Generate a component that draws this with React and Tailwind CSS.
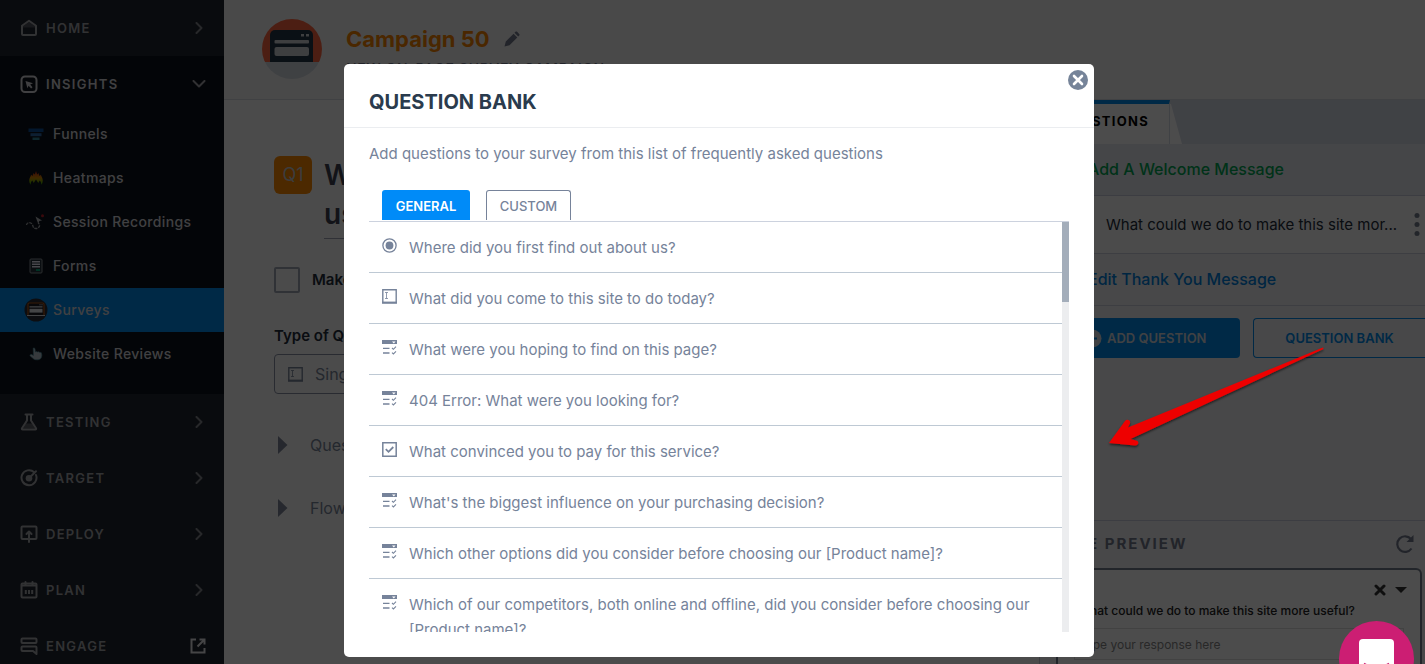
import React from "react";

const stroke = {
  fill: "none",
  stroke: "currentColor",
  strokeWidth: 2,
  strokeLinecap: "round",
  strokeLinejoin: "round",
};

const HomeIcon = () => (
  <svg width="18" height="18" viewBox="0 0 18 18" {...stroke}>
    <path d="M2 6.700 9 1.800l7 4.900V15a1 1 0 0 1-1 1H3a1 1 0 0 1-1-1z" />
    <path d="M3 8.500V7.200L9 3l6 4.200v1.300z" fill="currentColor" stroke="none" opacity=".35" />
  </svg>
);
const InsightsIcon = () => (
  <svg width="18" height="18" viewBox="0 0 18 18" {...stroke}>
    <rect x="1.500" y="1.500" width="15" height="15.500" rx="3.500" />
    <path d="M5.500 6l7.500 2.200-2.800 1.300 2.300 2.700-1.400 1.300-2.500-2.700-1.200 2.500z" fill="currentColor" stroke="none" />
  </svg>
);
const FlaskIcon = () => (
  <svg width="18" height="18" viewBox="0 0 18 18" {...stroke}>
    <path d="M5.500 1.500h7M7 2v5.500L2 15.200c-.4.800 0 1.300.7 1.300h12.600c.7 0 1.100-.5.700-1.300L11 7.500V2" />
    <path d="M6 10.500h6l3 5H3z" fill="currentColor" stroke="none" opacity=".45" />
  </svg>
);
const TargetIcon = () => (
  <svg width="18" height="18" viewBox="0 0 18 18" {...stroke}>
    <path d="M14.200 3.300A7.500 7.500 0 1 0 16 6" />
    <circle cx="9" cy="9.200" r="3.300" fill="currentColor" stroke="none" />
    <path d="M9 9.200l7-7" />
  </svg>
);
const DeployIcon = () => (
  <svg width="18" height="18" viewBox="0 0 18 18" {...stroke}>
    <rect x="1.500" y="1.500" width="15" height="12.500" rx="1" />
    <path d="M9 17V8M6.500 9 9 6.500 11.500 9" />
  </svg>
);
const PlanIcon = () => (
  <svg width="18" height="18" viewBox="0 0 18 18" {...stroke}>
    <rect x="1.500" y="2.500" width="15" height="14" rx="1" />
    <path d="M2 4.500h14" />
    <path d="M5.500 1v3M12.500 1v3" />
    <path d="M5.800 9v4M9 9v4M12.200 9v4" strokeLinecap="butt" />
  </svg>
);
const EngageIcon = () => (
  <svg width="18" height="18" viewBox="0 0 18 18" {...stroke}>
    <rect x="1.500" y="1.500" width="15" height="4.500" rx="1" />
    <path d="M16.500 17V10.500a1 1 0 0 0-1-1h-13a1 1 0 0 0-1 1V13a1 1 0 0 0 1 1H13z" />
  </svg>
);
const Chevron = ({ down }) => (
  <svg width="16" height="16" viewBox="0 0 16 16" {...stroke} opacity=".75">
    <path d={down ? "M3.500 5 9 10.500 14.500 5" : "M6.500 3 11.500 8l-5 5"} />
  </svg>
);
const ExternalIcon = () => (
  <svg width="16" height="16" viewBox="0 0 16 16" fill="none" stroke="#e8e8ea" strokeWidth="2">
    <path d="M6 1.500H1.500v13h13V10M9.500 1.500h5v5M14 2 7.500 8.500" />
  </svg>
);

const FunnelIcon = () => (
  <svg width="16" height="14" viewBox="0 0 16 14">
    <path fill="#0b4f96" d="M.5 1.500h15v3.500h-15z" />
    <path fill="#2d6aa8" d="M2.500 6.200h11v3h-11z" />
    <path fill="#2f8298" d="M4.500 10.500h7v2.500h-7z" />
  </svg>
);
const FlameIcon = () => (
  <svg width="14" height="14" viewBox="0 0 14 14">
    <defs>
      <linearGradient id="heat" x1="0" y1="0" x2="0" y2="1">
        <stop offset="0" stopColor="#c81e1e" />
        <stop offset=".5" stopColor="#d08a00" />
        <stop offset="1" stopColor="#2fb400" />
      </linearGradient>
    </defs>
    <path
      fill="url(#heat)"
      d="M7 0l1.200 3.500L9.500 2l1 3 1.300-1.200L13 6.500c1.200 2.500 1 4.800-.6 7.300-.2-2.300-.8-3.400-1.700-4.300L9.300 12 7 8.500 4.700 12 3.300 9.500c-.9.900-1.500 2-1.700 4.300C0 11.300-.2 9 1 6.500l1.200-2.700L3.500 5l1-3 1.300 1.500z"
    />
  </svg>
);
const RecordingIcon = () => (
  <svg width="22" height="18" viewBox="0 0 22 18">
    <path d="M1.500 12C2 9 5.500 9 7 11s.5 4.500 4 4.500 5-4 2-5.500" fill="none" stroke="#a4a8ac" strokeWidth="1.300" strokeDasharray="3 1" />
    <path fill="#b4b8bc" d="M10.500 3.500l6.500 4-2.700.6-1 2.900z" />
    <circle cx="17.500" cy="2.800" r="1.500" fill="#c3202a" />
  </svg>
);
const FormIcon = () => (
  <svg width="14" height="16" viewBox="0 0 14 16">
    <rect x="1" y="1" width="12" height="14" rx="1" fill="#24303a" stroke="#8d959b" />
    <path d="M3 3.800h8M3 6.300h8M3 8.800h8" stroke="#eef" strokeWidth="1.600" />
    <path d="M7 12h4" stroke="#00a77a" strokeWidth="2" />
  </svg>
);
const SurveyIcon = () => (
  <svg width="24" height="24" viewBox="0 0 24 24">
    <circle cx="12" cy="12" r="11.500" fill="#2a2e38" />
    <path d="M4 17V6.500a1.500 1.500 0 0 1 1.500-1.500h13a1.500 1.500 0 0 1 1.500 1.500V17" fill="#1d1d24" stroke="#b85a14" strokeWidth="1.200" />
    <path d="M5.500 8.800h13M3 17.500h18" stroke="#d9dde2" strokeWidth="1.200" />
    <path d="M5.500 10.800h13v3.800h-13z" fill="#e3e6ea" />
    <path d="M15.500 6.800h1M17.500 6.800h1" stroke="#e3e6ea" />
  </svg>
);
const HandIcon = () => (
  <svg width="14" height="14" viewBox="0 0 14 14">
    <path
      fill="#b4c4cc"
      stroke="#4c93a8"
      strokeWidth=".6"
      d="M4.200 1.200c.8-.5 1.700-.1 1.800.8l.4 3 1.300-.4.900.5 1.200-.3.900.6 1.400.1c1 1.600 1 4.500-.4 6.100-1.200 1.400-4.800 1.600-6.700.6L1.200 9c-.6-1 .3-1.900 1.400-1.500l1.900 1z"
    />
  </svg>
);

const sub = [
  ["Funnels", FunnelIcon],
  ["Heatmaps", FlameIcon],
  ["Session Recordings", RecordingIcon],
  ["Forms", FormIcon],
  ["Surveys", SurveyIcon],
  ["Website Reviews", HandIcon],
];
const lower = [
  ["TESTING", FlaskIcon],
  ["TARGET", TargetIcon],
  ["DEPLOY", DeployIcon],
  ["PLAN", PlanIcon],
  ["ENGAGE", EngageIcon],
];

function NavRow({ label, Icon, end, bright }) {
  return (
    <a
      href="#"
      className={`flex h-14 items-center gap-2 pr-[18px] pl-5 text-[13px] font-semibold tracking-widest ${bright ? "text-[#d8d8dc]" : "text-[#a6a7ac]"}`}
    >
      <Icon />
      <span className="grow pt-0.5">{label}</span>
      {end}
    </a>
  );
}

function Sidebar() {
  return (
    <nav className="w-56 shrink-0 bg-[#20252f]">
      <NavRow label="HOME" Icon={HomeIcon} end={<Chevron />} />
      <div className="bg-[#0d131b] pb-[18px]">
        <NavRow label="INSIGHTS" Icon={InsightsIcon} end={<Chevron down />} bright />
        {sub.map(([label, Icon]) => (
          <a
            key={label}
            href="#"
            className={`flex h-11 items-center gap-[5px] pl-6 text-sm font-medium tracking-wide text-[#d8d8dc] ${label === "Surveys" ? "bg-[#008aec]" : ""}`}
          >
            <span className="flex w-6 justify-center">
              <Icon />
            </span>
            {label}
          </a>
        ))}
      </div>
      {lower.map(([label, Icon]) => (
        <NavRow key={label} label={label} Icon={Icon} end={label === "ENGAGE" ? <ExternalIcon /> : <Chevron />} />
      ))}
    </nav>
  );
}

const CampaignLogo = () => (
  <svg width="60" height="60" viewBox="0 0 60 60">
    <defs>
      <clipPath id="disc">
        <circle cx="30" cy="30" r="30" />
      </clipPath>
    </defs>
    <g clipPath="url(#disc)">
      <path fill="#ff6640" d="M0 0h60v43H0z" />
      <path fill="#d4d9e1" d="M0 43h60v17H0z" />
      <path fill="#243746" d="M8 43V16a5 5 0 0 1 5-5h33a5 5 0 0 1 5 5v27z" />
      <rect x="12.500" y="21" width="34.500" height="3.500" rx="1" fill="#d0d2d5" />
      <rect x="12.500" y="28" width="34.500" height="9" rx="2" fill="#d0d2d5" />
      <path fill="#d0d2d5" d="M39 15h3v2.500h-3zM44 15h3v2.500h-3z" />
    </g>
  </svg>
);
const PencilIcon = () => (
  <svg width="16" height="16" viewBox="0 0 16 16" fill="#747a8c">
    <path d="M.5 15.500l1.300-5L9.600 2.700l3.700 3.700L5.500 14.200zM10.500 1.800l1-1c.5-.5 1.100-.5 1.600 0l2.100 2.100c.5.5.5 1.100 0 1.600l-1 1z" />
  </svg>
);
const TextBoxIcon = () => (
  <svg width="15" height="15" viewBox="0 0 15 15" fill="none" stroke="currentColor">
    <path d="M.8.8h13.400v13H.8z" strokeWidth="1.400" />
    <path d="M0 13.600h15" strokeWidth="2" />
    <path d="M3 3.500h3M4.500 3.500v6M3 9.500h3" strokeWidth=".8" />
  </svg>
);
const RadioIcon = () => (
  <svg width="15" height="15" viewBox="0 0 15 15">
    <circle cx="7.500" cy="7.500" r="6.600" fill="none" stroke="currentColor" strokeWidth="1.300" />
    <circle cx="7.500" cy="7.500" r="3.900" fill="currentColor" />
  </svg>
);
const CheckIcon = () => (
  <svg width="15" height="15" viewBox="0 0 15 15" fill="none" stroke="currentColor">
    <path d="M.8.8h13.400v13.400H.8z" strokeWidth="1.500" />
    <path d="M3.800 7.200l2.700 2.600 4.800-4.800" strokeWidth="1.800" />
  </svg>
);
const SelectIcon = () => (
  <svg width="15" height="15" viewBox="0 0 15 15" fill="none" stroke="currentColor">
    <path d="M0 0h15v4H0z" fill="currentColor" stroke="none" />
    <path d="M10 1.500h3.600L11.800 3.400z" fill="#fff" stroke="none" />
    <path d="M1 8.300h6.500M1 13h6.500" strokeWidth="1.300" />
    <path d="M10 8l1.400 1.300L14 6.700M10 12.700l1.400 1.300L14 11.400" strokeWidth="1.100" />
  </svg>
);
const Triangle = () => (
  <svg width="10" height="18" viewBox="0 0 10 18" fill="#80889a">
    <path d="M0 0l9.500 9L0 18z" />
  </svg>
);

function Editor() {
  return (
    <main className="grow px-[50px] pt-14 text-[#222c3a]">
      <div className="flex gap-3">
        <span className="flex size-[38px] shrink-0 items-center justify-center rounded-md bg-[#ff8a00] text-lg text-[#c8cbd0]">Q1</span>
        <h2 className="w-[660px] border-b border-[#a0a5b5] pb-1 text-[28px] leading-[39px] font-semibold text-[#3c4252]">
          What could we do to make this site more
          <br />
          useful?
        </h2>
      </div>
      <label className="mt-7 flex items-center gap-3 text-[15px] font-semibold">
        <input type="checkbox" className="size-[26px] appearance-none rounded-xs border-2 border-[#a0a7b5]" />
        Make this question required
      </label>
      <p className="mt-[31px] text-[15px] leading-6 font-semibold">Type of Question</p>
      <button className="mt-1.5 flex h-10 w-80 items-center gap-3 rounded-sm border border-[#8a92a5] px-[13px] text-base text-[#7a8599]">
        <TextBoxIcon />
        Single Line Text
      </button>
      <button className="mt-[39px] flex items-center gap-[22px] pl-1 text-base text-[#7a8599]">
        <Triangle />
        Question Image
      </button>
      <button className="mt-[39px] flex items-center gap-[22px] pl-1 text-base text-[#7a8599]">
        <Triangle />
        Flow Logic
      </button>
    </main>
  );
}

function SidePanel() {
  return (
    <aside className="flex w-[386px] shrink-0 flex-col border-l border-[#c8ccd8] bg-[#f0f2f5]">
      <div className="flex h-11 bg-[#d8dce8]">
        <button className="h-full w-[130px] border-t-4 border-r border-t-[#008aec] border-r-[#d8dce8] bg-white pr-5 pb-1 text-right text-[13px] font-bold tracking-widest text-black">
          QUESTIONS
        </button>
        <svg width="12" height="44" viewBox="0 0 12 44" fill="#fff">
          <path d="M0 4h1l11 40H0z" />
        </svg>
      </div>
      <a href="#" className="flex h-[52px] items-center border-b border-[#c8ccdd] bg-[#e8ebf2] pb-0.5 pl-12 text-base font-medium text-[#00a854]">
        Add A Welcome Message
      </a>
      <div className="flex h-[57px] items-center justify-between bg-[#fcfcfc] pt-0.5 pr-[5px] pl-[66px] text-[15px] whitespace-nowrap text-[#222c3a]">
        What could we do to make this site mor...
        <svg width="6" height="26" viewBox="0 0 6 26" fill="#747c8c">
          <circle cx="3" cy="2.500" r="2.500" />
          <circle cx="3" cy="11.500" r="2.500" />
          <circle cx="3" cy="20.500" r="2.500" />
        </svg>
      </div>
      <a href="#" className="flex h-[53px] items-center border-y border-[#ccd0dd] pb-0.5 pl-12 text-base font-medium text-[#007fdd]">
        Edit Thank You Message
      </a>
      <div className="flex gap-[13px] pt-3 pl-[15px]">
        <button className="flex h-10 w-[185px] shrink-0 items-center gap-[5px] rounded-sm bg-[#008aec] pl-7 text-[13px] font-semibold text-[#d8dbe0]">
          <svg width="19" height="19" viewBox="0 0 19 19">
            <circle cx="9.500" cy="9.500" r="9" fill="#d8dbe0" />
            <path d="M9.500 5v9M5 9.500h9" stroke="#008aec" strokeWidth="2" />
          </svg>
          <span className="pt-0.5">ADD QUESTION</span>
        </button>
        <button className="h-10 grow rounded-l-sm border border-r-0 border-[#008aec] pt-0.5 text-[13px] font-semibold text-[#008aec]">QUESTION BANK</button>
      </div>
      <div className="mt-[162px] flex h-12 items-center justify-between border-t border-[#c8ccdd] pr-2.5 pb-0.5 pl-[18px] text-[15px] font-bold tracking-[2px] text-[#747a8c]">
        <span className="pt-0.5">SITE PREVIEW</span>
        <svg width="20" height="20" viewBox="0 0 20 20" fill="none" stroke="currentColor" strokeWidth="2.200">
          <path d="M16.500 14.500A7.800 7.800 0 1 1 16 5" />
          <path d="M18.500 1v7h-7z" fill="currentColor" stroke="none" />
        </svg>
      </div>
      <div className="mr-[3px] ml-4 grow rounded-t-md border-2 border-b-0 border-[#747c8c] bg-white px-4 text-[#222]">
        <div className="-mr-[3px] flex justify-end gap-[9px] pt-[13px]">
          <svg width="12" height="14" viewBox="0 0 12 14" stroke="#333" strokeWidth="3" strokeLinecap="round">
            <path d="M2 3l8 8M10 3l-8 8" />
          </svg>
          <svg width="12" height="14" viewBox="0 0 12 14" fill="#333">
            <path d="M0 4h12l-6 6z" />
          </svg>
        </div>
        <p className="pt-1 pl-1 text-xs leading-5 font-medium">What could we do to make this site more useful?</p>
        <input
          aria-label="Response"
          placeholder="Type your response here"
          className="mt-[7px] h-8 w-full border border-[#ddd] px-1 text-xs placeholder:text-[#888]"
        />
      </div>
    </aside>
  );
}

const questions = [
  [RadioIcon, "Where did you first find out about us?"],
  [TextBoxIcon, "What did you come to this site to do today?"],
  [SelectIcon, "What were you hoping to find on this page?"],
  [SelectIcon, "404 Error: What were you looking for?"],
  [CheckIcon, "What convinced you to pay for this service?"],
  [SelectIcon, "What's the biggest influence on your purchasing decision?"],
  [SelectIcon, "Which other options did you consider before choosing our [Product name]?"],
  [SelectIcon, "Which of our competitors, both online and offline, did you consider before choosing our [Product name]?"],
];

function QuestionBank() {
  return (
    <section
      role="dialog"
      aria-labelledby="bank-title"
      className="relative mt-16 w-[750px] rounded-[5px] bg-white pb-[25px] text-[15px] text-[#76839a]"
    >
      <button aria-label="Close" className="absolute top-1.5 right-1.5">
        <svg width="20" height="20" viewBox="0 0 20 20">
          <circle cx="10" cy="10" r="10" fill="#768499" />
          <path d="M6 6l8 8M14 6l-8 8" stroke="#fff" strokeWidth="2.600" strokeLinecap="round" />
        </svg>
      </button>
      <h1 id="bank-title" className="flex h-16 items-center border-b border-[#ebedf0] pt-3 pl-[25px] text-xl font-bold text-[#2a3b4d]">
        QUESTION BANK
      </h1>
      <div className="px-[25px]">
        <p className="pt-[15px] leading-[22px]">Add questions to your survey from this list of frequently asked questions</p>
        <div className="flex gap-4 border-b border-[#ccd2de] pt-[25px] pb-px pl-[13px] text-[13px]">
          <button className="h-[30px] w-[88px] rounded-t-[3px] bg-[#008bf8] pt-[3px] font-semibold text-white">GENERAL</button>
          <button className="h-[30px] w-[85px] rounded-t-[3px] border border-b-0 border-[#76839a] pt-0.5 font-medium">CUSTOM</button>
        </div>
        <div className="flex h-[410px] overflow-hidden">
          <ul className="grow">
            {questions.map(([Icon, text]) => (
              <li key={text} className="flex gap-3 border-b border-[#bec9d4] pt-[13px] pr-6 pb-3 pl-[13px] leading-[25px]">
                <span className="shrink-0 pt-[3px]">
                  <Icon />
                </span>
                {text}
              </li>
            ))}
          </ul>
          <div className="w-[7px] shrink-0 bg-[#ecedef]">
            <div className="h-20 bg-[#a3adba]" />
          </div>
        </div>
      </div>
    </section>
  );
}

export default function App() {
  return (
    <div className="relative h-screen overflow-hidden font-['Inter','Liberation_Sans',sans-serif]">
      <div className="flex h-full bg-[#fcfcfc]">
        <Sidebar />
        <div className="flex min-w-0 grow flex-col">
          <header className="flex h-[100px] shrink-0 gap-6 border-b border-[#d8dbe2] bg-[#f5f5f5] pt-[19px] pl-[38px]">
            <CampaignLogo />
            <div>
              <h1 className="flex h-10 items-center gap-3.5 text-[22px] font-bold text-[#f88400]">
                Campaign 50 <PencilIcon />
              </h1>
              <p className="text-sm font-medium tracking-wider text-[#747a8c]">NEW ON-PAGE SURVEY CAMPAIGN</p>
            </div>
          </header>
          <div className="flex min-h-0 grow">
            <Editor />
            <SidePanel />
          </div>
        </div>
      </div>
      <div className="absolute inset-0 flex items-start justify-center bg-black/70 pl-[13px]">
        <QuestionBank />
      </div>
      <svg className="absolute top-[340px] right-[100px]" width="230" height="115" viewBox="0 0 230 115">
        <defs>
          <filter id="drop" x="-5%" y="-5%" width="110%" height="115%">
            <feDropShadow dx="0" dy="1.500" stdDeviation="1" floodOpacity=".6" />
          </filter>
        </defs>
        <path
          filter="url(#drop)"
          fill="#ee0000"
          d="M228 7.500 33 87.500l2-4c1-3.500-3-5-5-2.500L14 103l26 2.500c4 0 4.500-4.500 1-5l-5.500-1.500L228.500 9z"
        />
      </svg>
      <button aria-label="Open chat" className="absolute right-[11px] -bottom-[32px] flex size-[75px] justify-center rounded-full bg-[#cc1e73] pt-[18px]">
        <svg width="35" height="40" viewBox="0 0 35 40">
          <rect width="35" height="40" rx="4" fill="#fff" />
          <path d="M5 24.500c7 5 18 5 25 0" fill="none" stroke="#cc1e73" strokeWidth="2" />
        </svg>
      </button>
    </div>
  );
}
